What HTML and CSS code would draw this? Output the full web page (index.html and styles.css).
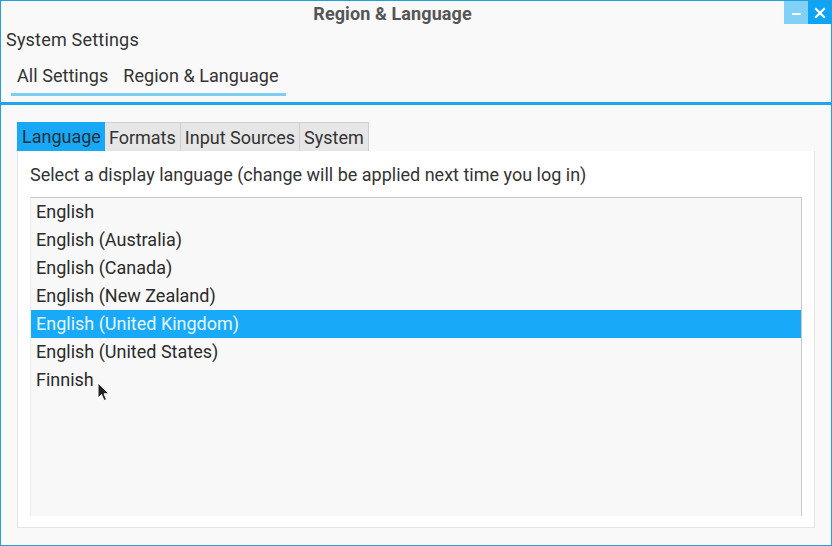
FILE: index.html
```html
<!DOCTYPE html>
<html>
<head>
<meta charset="utf-8">
<link rel="stylesheet" href="styles.css">
</head>
<body>
<div class="window">
  <div class="titlebar">
    <div class="title">Region &amp; Language</div>
    <div class="winbtns">
      <div class="wbtn min"><span class="minbar"></span></div>
      <div class="wbtn close">
        <svg width="12" height="12" viewBox="0 0 12 12"><path d="M2 2 L10 10 M10 2 L2 10" stroke="#fff" stroke-width="2.2" stroke-linecap="square"/></svg>
      </div>
    </div>
  </div>
  <div class="apptitle">System Settings</div>
  <div class="crumbs">
    <div class="crumbrow"><span>All Settings</span><span>Region &amp; Language</span></div>
  </div>
  <div class="sep"></div>
  <div class="content">
    <div class="tabs">
      <div class="tab active">Language</div>
      <div class="tab">Formats</div>
      <div class="tab">Input Sources</div>
      <div class="tab">System</div>
    </div>
    <div class="panel">
      <div class="label">Select a display language (change will be applied next time you log in)</div>
      <div class="list">
        <div class="item">English</div>
        <div class="item">English (Australia)</div>
        <div class="item">English (Canada)</div>
        <div class="item">English (New Zealand)</div>
        <div class="item selected">English (United Kingdom)</div>
        <div class="item">English (United States)</div>
        <div class="item">Finnish</div>
      </div>
    </div>
  </div>
  <svg class="cursor" width="14" height="20" viewBox="0 0 14 20"><path d="M1 1 L1 16 L4.5 12.5 L7 18.5 L9.5 17.5 L7 11.8 L12 11.8 Z" fill="#222" stroke="#fff" stroke-width="1"/></svg>
</div>
</body>
</html>
```
FILE: styles.css
```css
* { box-sizing: border-box; }
html, body { margin: 0; padding: 0; }
body {
  font-family: Roboto, "Noto Sans", sans-serif;
  background: #f8f8f8;
}
.window {
  position: relative;
  width: 832px;
  height: 546px;
  border: 1px solid #22a0dc;
  background: #f9f9f9;
  display: flex;
  flex-direction: column;
}
.titlebar {
  height: 23px;
  display: flex;
  align-items: flex-start;
}
.title {
  flex: 1;
  text-align: center;
  font-weight: bold;
  font-size: 18px;
  letter-spacing: 0.1px;
  color: #555;
  line-height: 26px;
}
.winbtns {
  display: flex;
  align-self: stretch;
}
.wbtn {
  width: 24px;
  height: 23px;
  display: flex;
  align-items: center;
  justify-content: center;
}
.wbtn.min { background: #80d0f8; }
.wbtn.close { background: #0ea4f6; width: 23px; }
.minbar {
  width: 9px;
  height: 2px;
  background: #fff;
  margin-top: 3px;
}
.apptitle {
  font-size: 18px;
  color: #333;
  padding-left: 5px;
  line-height: 24px;
  margin-top: 4px;
  letter-spacing: 0.2px;
}
.crumbs {
  padding: 0 0 0 10px;
  margin-top: 12px;
  display: flex;
}
.crumbrow {
  display: flex;
  gap: 15px;
  padding: 0 7px 5px 6px;
  font-size: 18px;
  color: #333;
  line-height: 24px;
  letter-spacing: 0.05px;
  border-bottom: 3px solid #7ccdf4;
}
.sep {
  height: 3px;
  background: #1ea6ea;
  margin-top: 6px;
}
.content {
  padding: 17px 16px 17px 16px;
  flex: 1;
  display: flex;
  flex-direction: column;
}
.tabs {
  display: flex;
  height: 29px;
}
.tab {
  font-size: 18px;
  color: #333;
  background: #e6e6e6;
  border: 1px solid #cfcfcf;
  border-bottom: none;
  border-left: none;
  padding: 0 4px;
  line-height: 29px;
}
.tab.active {
  background: #18a8f5;
  color: #1d3140;
  border: none;
  padding: 0 4px 0 5px;
}
.panel {
  flex: 1;
  background: #fff;
  border: 1px solid #e4e4e4;
  border-top: none;
  padding: 12px 12px 11px 12px;
  display: flex;
  flex-direction: column;
}
.label {
  font-size: 18px;
  color: #333;
  line-height: 24px;
  padding-left: 0;
}
.list {
  margin-top: 10px;
  flex: 1;
  background: #f8f8f8;
  border-top: 1px solid #c8c8c8;
  border-right: 1px solid #c8c8c8;
  border-left: 1px solid #ececec;
}
.item {
  height: 28px;
  line-height: 28px;
  font-size: 18px;
  color: #2b2b2b;
  padding-left: 5px;
}
.item.selected {
  background: #18aaf8;
  color: #e6f6ff;
}
.cursor {
  position: absolute;
  left: 96px;
  top: 381px;
}
```
